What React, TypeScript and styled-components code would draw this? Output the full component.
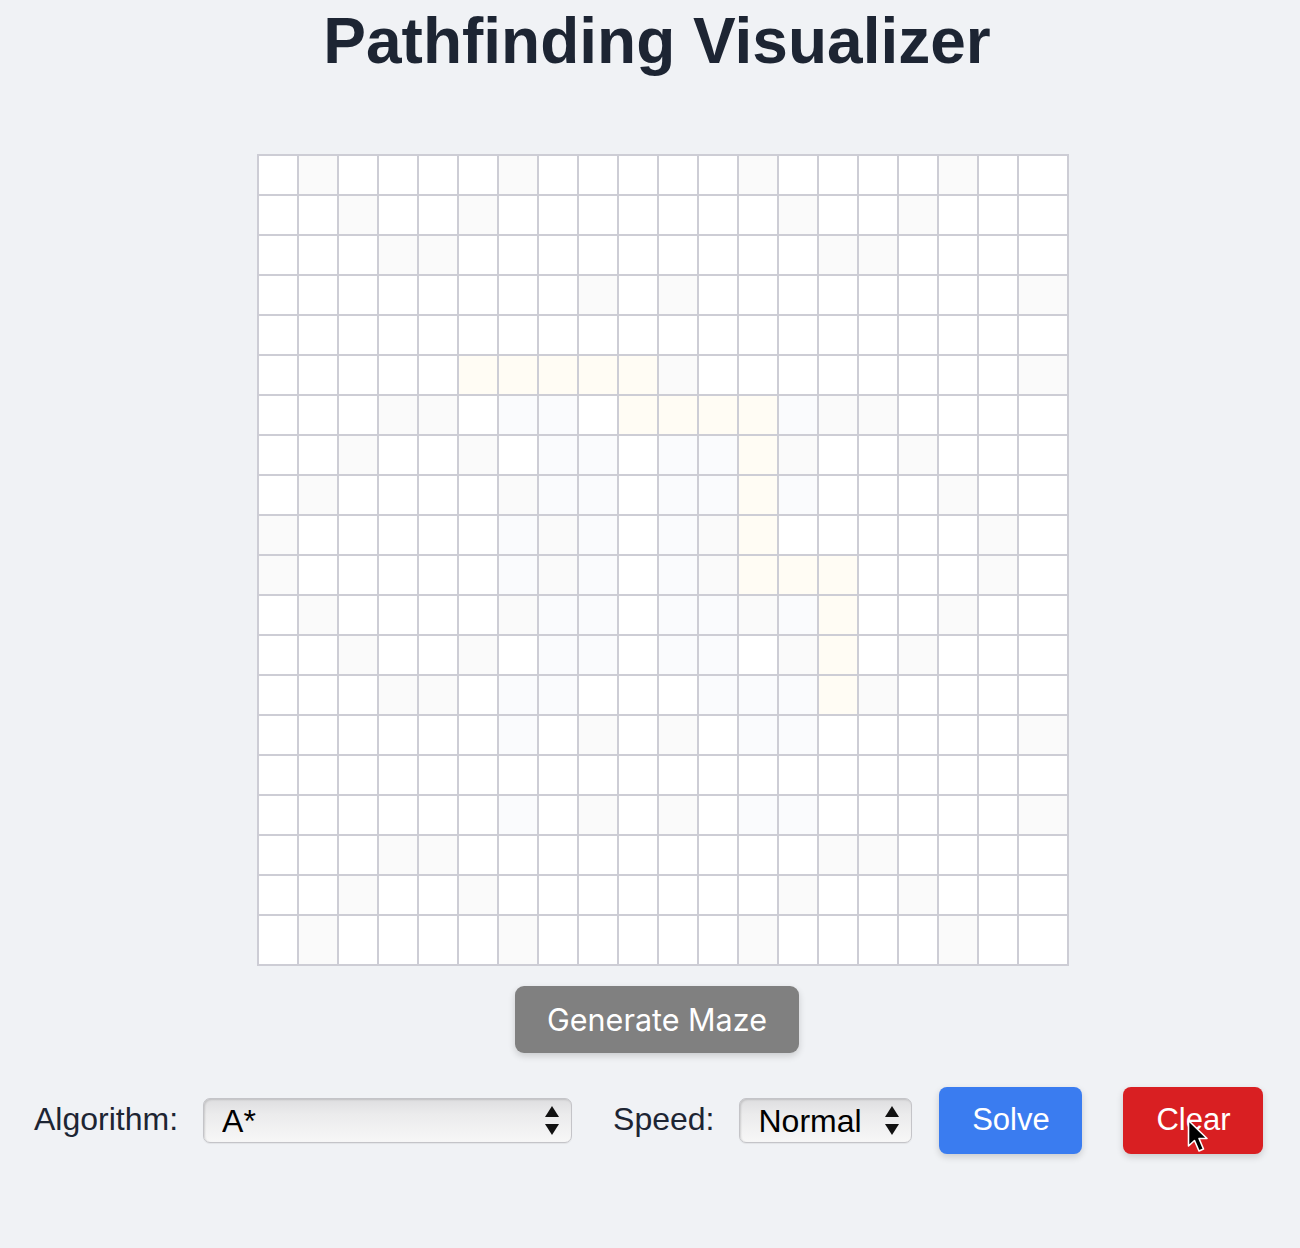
import React from "react";
import styled, { createGlobalStyle } from "styled-components";

const GlobalStyle = createGlobalStyle`
  html, body {
    margin: 0;
    padding: 0;
    background: #f0f2f5;
  }
  body {
    font-family: "Liberation Sans", Arial, Helvetica, sans-serif;
  }
`;

const Page = styled.div`
  display: flex;
  flex-direction: column;
  align-items: center;
  padding-left: 14px;
  min-height: 1248px;
  box-sizing: border-box;
`;

const Title = styled.h1`
  margin: 4px 0 0;
  font-size: 64px;
  line-height: 74px;
  font-weight: 700;
  color: #1d2533;
  font-family: "Liberation Sans", Arial, sans-serif;
`;

const BoardFrame = styled.div`
  width: 800px;
  margin-top: 76px;
`;

const Grid = styled.div`
  display: grid;
  width: max-content;
  grid-template-columns: repeat(19, 40px) 50px;
  grid-template-rows: repeat(19, 40px) 50px;
  border: 1px solid #cdcdd5;
  background: #ffffff;
`;

const Cell = styled.div<{ $tone: "empty" | "path" | "wall" | "visited" }>`
  box-sizing: border-box;
  border: 1px solid #cdcdd5;
  background: ${(p) =>
    p.$tone === "path"
      ? "#fffcf4"
      : p.$tone === "wall"
      ? "#fafafa"
      : p.$tone === "visited"
      ? "#fafbfd"
      : "#ffffff"};
`;

const GenerateButton = styled.button`
  margin-top: 20px;
  width: 284px;
  height: 67px;
  border: none;
  border-radius: 9px;
  background: #808080;
  color: #ffffff;
  font-family: Inter, "Liberation Sans", sans-serif;
  font-size: 30.5px;
  box-shadow: 0 3px 7px rgba(0, 0, 0, 0.16);
  cursor: pointer;
`;

const Controls = styled.div`
  align-self: stretch;
  margin-top: 33px;
  display: flex;
  align-items: center;
  padding-left: 20px;
  height: 67px;
`;

const Label = styled.span<{ $gapBefore?: number }>`
  font-size: 32px;
  color: #1d2533;
  margin-left: ${(p) => p.$gapBefore ?? 0}px;
`;

const SelectWrap = styled.div<{ $width: number }>`
  position: relative;
  width: ${(p) => p.$width}px;
  height: 45px;
  margin-left: 25px;
  margin-top: 2px;
`;

const NativeSelect = styled.select`
  appearance: none;
  -webkit-appearance: none;
  width: 100%;
  height: 100%;
  box-sizing: border-box;
  border: 1px solid #c4c4c8;
  border-radius: 7px;
  padding: 0 0 0 18px;
  font-family: "Liberation Sans", Arial, sans-serif;
  font-size: 32px;
  color: #000000;
  background: linear-gradient(#dedee0 0%, #ebebec 35%, #f7f7f7 100%);
  box-shadow: inset 1px 1px 2px rgba(0, 0, 0, 0.14), 0 1px 1px rgba(0, 0, 0, 0.06);
  outline: none;
`;

const Arrows = styled.svg`
  position: absolute;
  right: 13px;
  top: 8px;
  pointer-events: none;
`;

const ActionButton = styled.button<{ $bg: string; $width: number; $gapBefore: number }>`
  position: relative;
  width: ${(p) => p.$width}px;
  height: 67px;
  margin-left: ${(p) => p.$gapBefore}px;
  margin-top: 1px;
  border: none;
  border-radius: 8px;
  background: ${(p) => p.$bg};
  color: #ffffff;
  font-family: "Liberation Sans", Arial, sans-serif;
  font-size: 31px;
  box-shadow: 0 3px 7px rgba(0, 0, 0, 0.16);
  cursor: pointer;
`;

const Pointer = styled.svg`
  position: absolute;
  left: 64px;
  top: 32px;
  pointer-events: none;
`;

const pathCells = new Set<string>();
[5, 6, 7, 8, 9].forEach((c) => pathCells.add(`5-${c}`));
[9, 10, 11, 12].forEach((c) => pathCells.add(`6-${c}`));
[7, 8, 9].forEach((r) => pathCells.add(`${r}-12`));
[12, 13, 14].forEach((c) => pathCells.add(`10-${c}`));
[11, 12, 13].forEach((r) => pathCells.add(`${r}-14`));

const toneFor = (r: number, c: number): "empty" | "path" | "wall" | "visited" => {
  if (pathCells.has(`${r}-${c}`)) return "path";
  const h = (r * 37 + c * 91 + r * c * 13) % 11;
  if (h === 3 || h === 7) return "wall";
  if (r >= 6 && r <= 16 && c >= 6 && c <= 13 && h % 2 === 0) return "visited";
  return "empty";
};

const SelectArrows = () => (
  <Arrows width="14" height="29" viewBox="0 0 14 29">
    <polygon points="7,0 14,11 0,11" fill="#111" />
    <polygon points="0,18 14,18 7,29" fill="#111" />
  </Arrows>
);

export default function App() {
  const cells = [];
  for (let r = 0; r < 20; r++) {
    for (let c = 0; c < 20; c++) {
      cells.push(<Cell key={`${r}-${c}`} $tone={toneFor(r, c)} />);
    }
  }
  return (
    <>
      <GlobalStyle />
      <Page>
        <Title>Pathfinding Visualizer</Title>
        <BoardFrame>
          <Grid>{cells}</Grid>
        </BoardFrame>
        <GenerateButton>Generate Maze</GenerateButton>
        <Controls>
          <Label>Algorithm:</Label>
          <SelectWrap $width={369}>
            <NativeSelect defaultValue="astar">
              <option value="astar">A*</option>
              <option value="dijkstra">Dijkstra</option>
              <option value="bfs">BFS</option>
              <option value="dfs">DFS</option>
            </NativeSelect>
            <SelectArrows />
          </SelectWrap>
          <Label $gapBefore={41}>Speed:</Label>
          <SelectWrap $width={173}>
            <NativeSelect defaultValue="normal">
              <option value="slow">Slow</option>
              <option value="normal">Normal</option>
              <option value="fast">Fast</option>
            </NativeSelect>
            <SelectArrows />
          </SelectWrap>
          <ActionButton $bg="#3a7cf0" $width={143} $gapBefore={27}>
            Solve
          </ActionButton>
          <ActionButton $bg="#d91f22" $width={140} $gapBefore={41}>
            Clear
            <Pointer width="22" height="36" viewBox="0 0 22 36">
              <path
                d="M1.5 1.5 L1.5 27 L7.5 21.5 L12 32 L16.5 30 L12 19.5 L20 19.5 Z"
                fill="#000"
                stroke="#fff"
                strokeWidth="1.6"
                strokeLinejoin="round"
              />
            </Pointer>
          </ActionButton>
        </Controls>
      </Page>
    </>
  );
}
